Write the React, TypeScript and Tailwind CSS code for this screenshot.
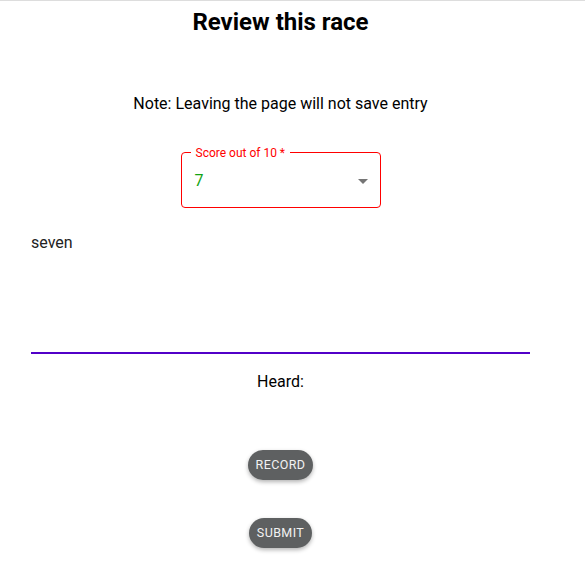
import { useState } from "react";

export default function App() {
  const [text, setText] = useState("seven");

  return (
    <main className="min-h-[588px] bg-white border-t border-[#dddddd] font-['Roboto',sans-serif] text-black">
      <div className="w-[561px] flex flex-col items-center">
        <h1 className="text-[24px] font-bold leading-[32px] mt-[5px]">Review this race</h1>

        <p className="text-[16px] leading-[24px] mt-[54px]">Note: Leaving the page will not save entry</p>

        {/* Score select */}
        <div className="relative mt-[36px] w-[200px] h-[56px] rounded-[4px] border border-[#ff0000]">
          <span className="absolute -top-[8px] left-[9px] bg-white px-[5px] text-[12px] leading-[16px] text-[#ff0000]">
            Score out of 10 *
          </span>
          <div className="flex items-center justify-between h-full pl-[13px] pr-[12px] pt-[2px]">
            <span className="text-[16px] text-[#13a313]">7</span>
            <svg width="10" height="5" viewBox="0 0 10 5" className="fill-[#757575]">
              <path d="M0 0h10L5 5z" />
            </svg>
          </div>
        </div>

        {/* Text area */}
        <div className="self-start ml-[31px] mt-[23px] w-[499px]">
          <textarea
            value={text}
            onChange={(e) => setText(e.target.value)}
            className="block w-full h-[121px] resize-none outline-none text-[16px] leading-[20px] text-[#222222] pt-[2px]"
          />
          <div className="h-[2px] bg-[#5200c8]" />
        </div>

        <p className="text-[16px] leading-[24px] mt-[16px]">Heard:</p>

        <button className="mt-[56px] h-[30px] px-[8px] rounded-full bg-[#5e6061] text-[#f2f2f2] text-[12.5px] font-normal tracking-[0.4px] shadow-[0_2px_4px_rgba(0,0,0,0.3)]">
          RECORD
        </button>

        <button className="mt-[38px] h-[30px] px-[8px] rounded-full bg-[#5e6061] text-[#f2f2f2] text-[12.5px] font-normal tracking-[0.4px] shadow-[0_2px_4px_rgba(0,0,0,0.3)]">
          SUBMIT
        </button>
      </div>
    </main>
  );
}
